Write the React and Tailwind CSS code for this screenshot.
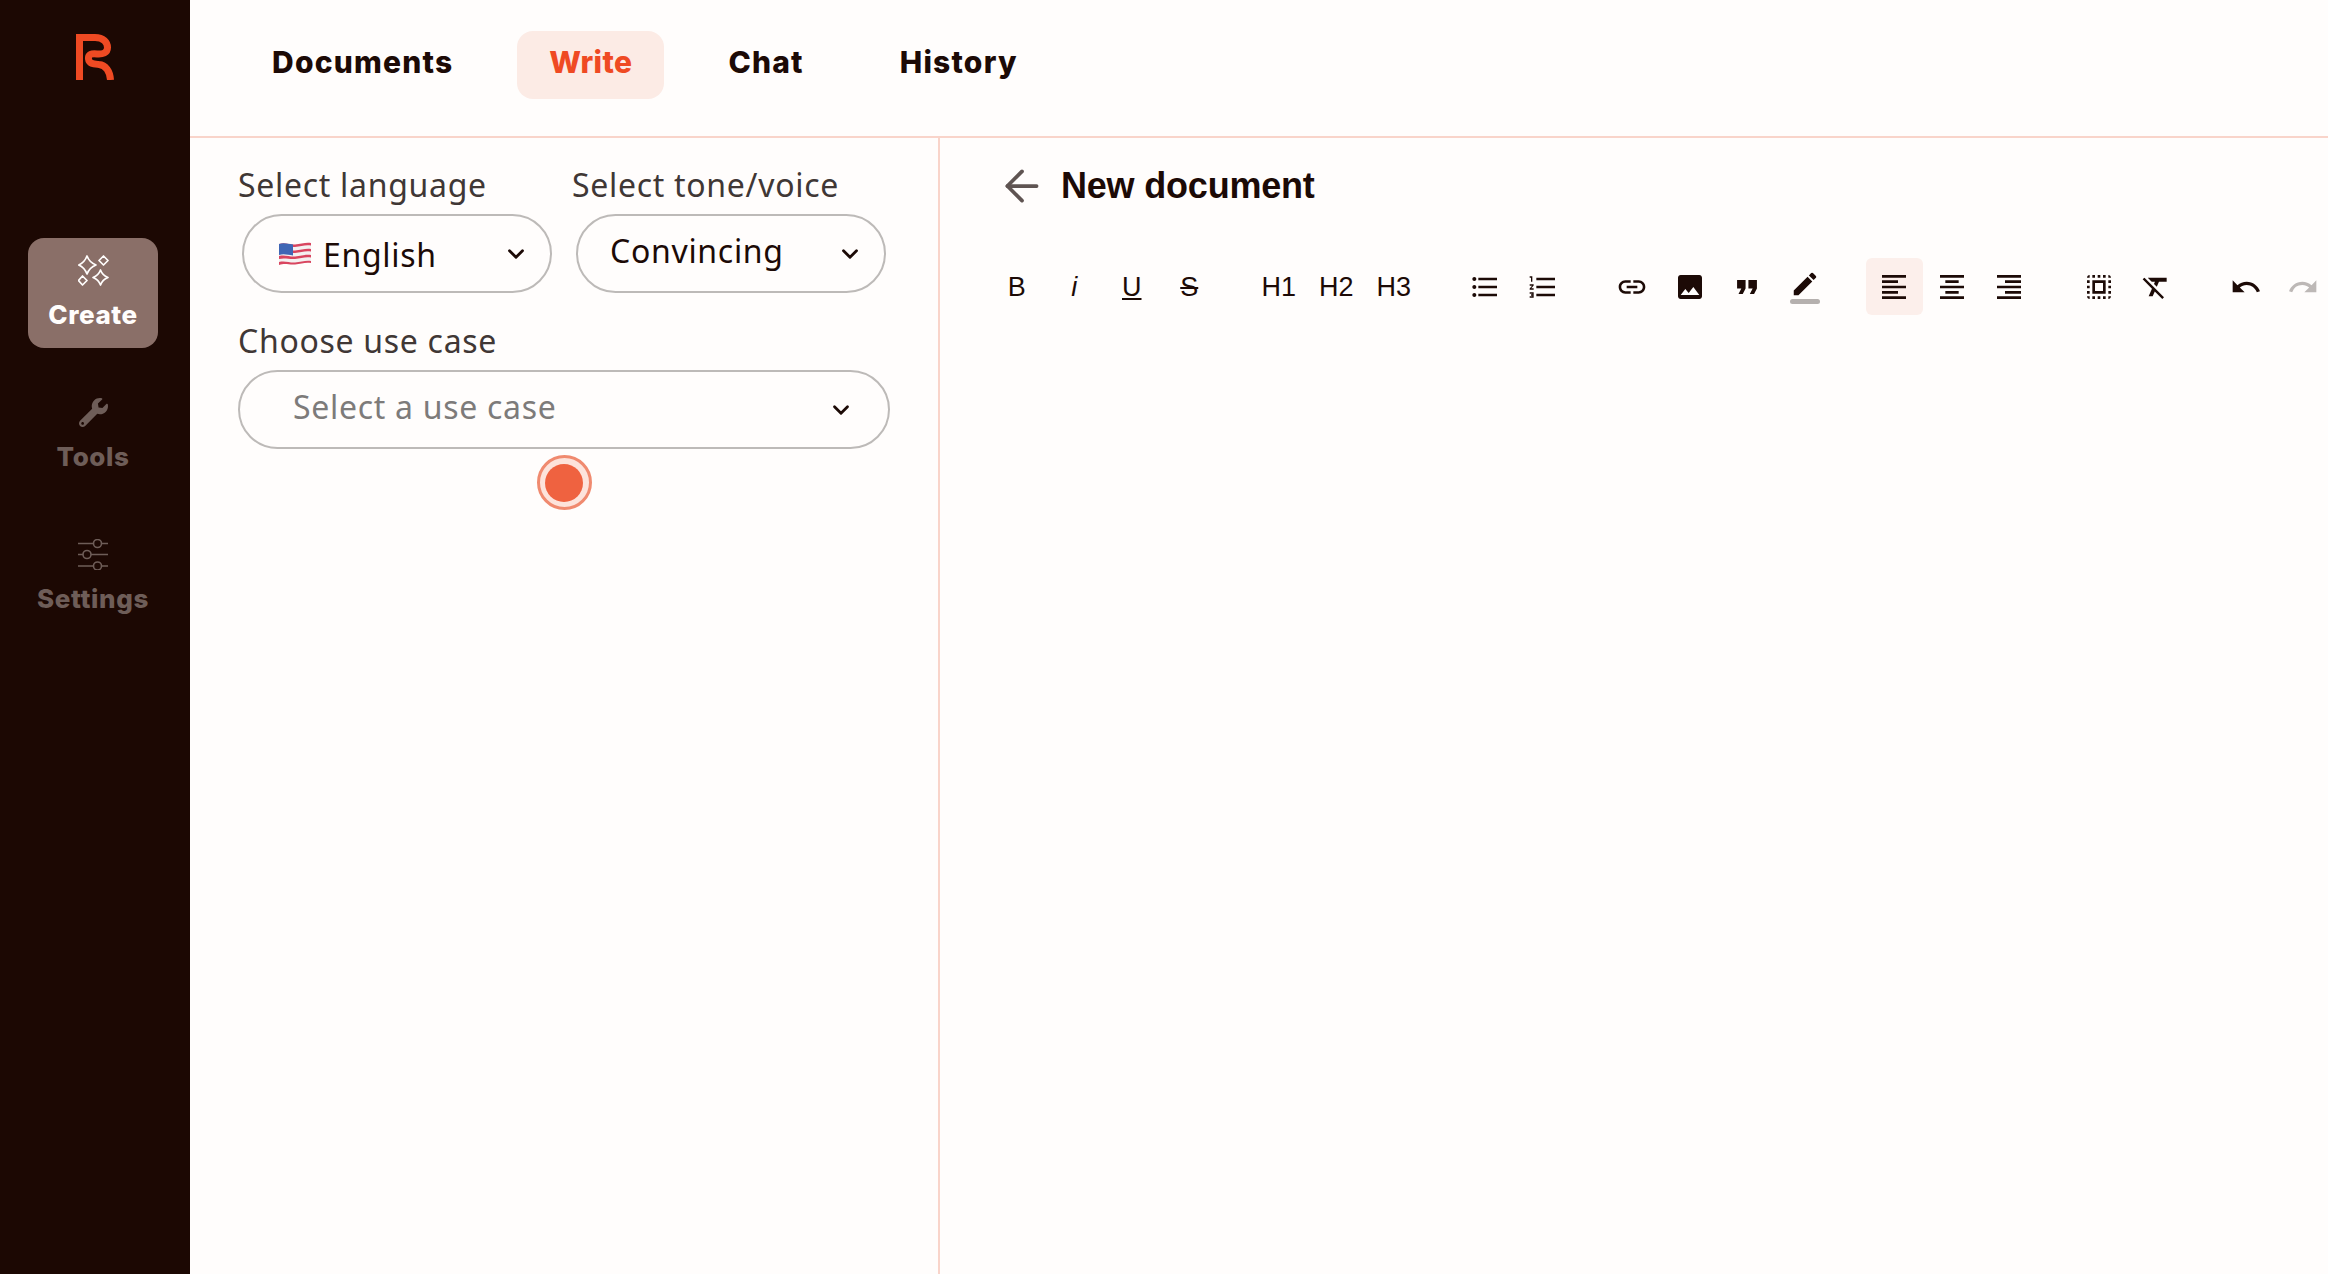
import { ArrowLeft, ChevronDown } from "lucide-react";
import { FaWrench } from "react-icons/fa";
import {
  MdFormatListBulleted,
  MdFormatListNumbered,
  MdLink,
  MdImage,
  MdFormatQuote,
  MdEdit,
  MdFormatAlignLeft,
  MdFormatAlignCenter,
  MdFormatAlignRight,
  MdSelectAll,
  MdFormatClear,
  MdUndo,
  MdRedo,
} from "react-icons/md";

const tabs = ["Documents", "Write", "Chat", "History"];

const Logo = () => (
  <svg width="38" height="46" viewBox="0 0 38 46" fill="none" stroke="#ef4a23" strokeWidth="7">
    <path d="M3.500 46V3.500H19C27.500 3.500 31.500 8.500 31.500 13.500C31.500 19 26.500 20.500 21 20C15.500 19.500 12 20 12.500 25C13 30 18 30 23 30.500C29.500 31 34 37 34.500 46" />
  </svg>
);

const Sparkles = () => (
  <svg width="31" height="31" viewBox="0 0 31 31" fill="none" stroke="#fffdfc" strokeWidth="1.7" strokeLinejoin="round">
    <path d="M9 1Q11.500 7.500 18 10Q11.500 12.500 9 19Q6.500 12.500 0.800 10Q6.500 7.500 9 1Z" />
    <path d="M25.500 1L30 5.500L25.500 10L21 5.500Z" />
    <path d="M4.500 21L9 25.500L4.500 30L0.500 25.500Z" />
    <path d="M22.500 15Q24.500 20.500 30 22.500Q24.500 24.500 22.500 30Q20.500 24.500 15 22.500Q20.500 20.500 22.500 15Z" />
  </svg>
);

const Sliders = () => (
  <svg width="31" height="31" viewBox="0 0 31 31" fill="none" stroke="#6e5d58" strokeWidth="1.6">
    <path d="M0 4.500H15M23 4.500H30M0 15.500H5M13 15.500H30M0 27H15M23 27H30" />
    <circle cx="19.500" cy="4.500" r="4" />
    <circle cx="9" cy="15.500" r="4" />
    <circle cx="19.500" cy="27" r="4" />
  </svg>
);

const Flag = () => (
  <svg width="32" height="24" viewBox="0 0 32 24">
    <path d="M0 2C6 0 11 3 16 2.500C22 2 27 0 32 1V21C26 20 22 22 16 22.500C10 23 6 21 0 23Z" fill="#f4f1f1" />
    <path d="M0 2C6 0 11 3 16 2.500C22 2 27 0 32 1V3.500C26 2.500 22 4.500 16 5C10 5.500 6 3.500 0 5Z" fill="#d9455f" />
    <path d="M0 8C6 6.500 11 9 16 8.500C22 8 27 6 32 7V9.500C26 8.500 22 10.500 16 11C10 11.500 6 9.500 0 11Z" fill="#d9455f" />
    <path d="M0 14C6 12.500 11 15 16 14.500C22 14 27 12 32 13V15.500C26 14.500 22 16.500 16 17C10 17.500 6 15.500 0 17Z" fill="#d9455f" />
    <path d="M0 20C6 18.500 11 21 16 20.500C22 20 27 18 32 19V21C26 20 22 22 16 22.500C10 23 6 21 0 23Z" fill="#d9455f" />
    <path d="M0 2C5 0.500 9 2 14 2.500V13.500C9 13 5 11.500 0 13Z" fill="#3f66b5" />
  </svg>
);

const NavItem = ({ icon, label, active }) => (
  <div
    className={`flex flex-col items-center justify-center w-[130px] h-[110px] pb-[3px] rounded-2xl font-['Inter',sans-serif] font-extrabold text-[26px] leading-8 tracking-[0.6px] ${
      active ? "bg-[#8a6f68] text-[#fffdfc]" : "text-[#6e5d58]"
    }`}
  >
    <div className="h-[36px] flex items-center justify-center">{icon}</div>
    <span className="mt-[11px]">{label}</span>
  </div>
);

const Btn = ({ children, active, className }) => (
  <button
    className={`w-[57.5px] h-[57px] shrink-0 rounded-md flex items-center justify-center text-[27px] text-[#1c0a06] ${
      active ? "bg-[#fcefeb]" : ""
    } ${className || ""}`}
  >
    {children}
  </button>
);

const App = () => {
  return (
    <div className="flex w-screen h-screen overflow-hidden bg-[#fffdfc] text-[#1c0a06]">
      <aside className="w-[190px] shrink-0 bg-[#1c0803] flex flex-col items-center">
        <div className="mt-[34px]">
          <Logo />
        </div>
        <div className="mt-[158px] mr-[4px] flex flex-col items-center gap-[32px]">
          <NavItem active icon={<Sparkles />} label="Create" />
          <NavItem icon={<FaWrench size={29} color="#6e5d58" />} label="Tools" />
          <NavItem icon={<Sliders />} label="Settings" />
        </div>
      </aside>

      <div className="flex-1 flex flex-col min-w-0">
        <header className="h-[138px] shrink-0 border-b-2 border-[#f9d4ca] flex items-start pl-[50px] pt-[31px] gap-8">
          {tabs.map((t) => (
            <div
              key={t}
              className={`h-[68px] px-8 pb-[5px] rounded-2xl flex items-center font-['Inter',sans-serif] font-extrabold text-[30px] ${
                t === "Write" ? "bg-[#fcebe5] text-[#ef4a23] tracking-[0.4px]" : "tracking-[1.2px]"
              }`}
            >
              {t}
            </div>
          ))}
        </header>

        <div className="flex-1 flex min-h-0">
          <section className="w-[750px] shrink-0 border-r-2 border-[#f9d4ca] pl-[48px] pt-[27px] font-['Noto_Sans',sans-serif] text-[32px] tracking-[0.7px]">
            <div className="flex gap-[20px]">
              <div className="w-[314px]">
                <div className="h-10 leading-10 text-[#403735]">Select language</div>
                <div className="ml-1 mt-[9px] w-[310px] h-[79px] rounded-full border-2 border-[#bdbab8] flex items-center pl-[35px] pr-[21px]">
                  <Flag />
                  <span className="ml-[12px] mt-[2px] flex-1">English</span>
                  <ChevronDown size={26} strokeWidth={2.6} />
                </div>
              </div>
              <div className="w-[314px]">
                <div className="h-10 leading-10 text-[#403735]">Select tone/voice</div>
                <div className="ml-1 mt-[9px] w-[310px] h-[79px] rounded-full border-2 border-[#bdbab8] flex items-center pl-[32px] pr-[21px]">
                  <span className="flex-1 mb-[6px]">Convincing</span>
                  <ChevronDown size={26} strokeWidth={2.6} />
                </div>
              </div>
            </div>

            <div className="mt-[28px] h-10 leading-10 text-[#403735]">Choose use case</div>
            <div className="mt-[9px] w-[652px] h-[79px] rounded-full border-2 border-[#bdbab8] flex items-center pl-[53px] pr-[34px] text-[#7d7b7a]">
              <span className="flex-1 mb-[6px]">Select a use case</span>
              <ChevronDown size={26} strokeWidth={2.6} className="text-[#1c0a06]" />
            </div>

            <div className="w-[652px] mt-[6px] flex justify-center">
              <div className="w-[55px] h-[55px] rounded-full border-[3px] border-[#f08a6f] bg-[#fde3db] flex items-center justify-center">
                <div className="w-[38px] h-[38px] rounded-full bg-[#ef6240]" />
              </div>
            </div>
          </section>

          <section className="flex-1 min-w-0 overflow-hidden pl-[48px] pt-[27px]">
            <div className="h-[42px] flex items-center">
              <ArrowLeft size={50} strokeWidth={1.8} className="ml-[9px] text-[#5f5452]" />
              <h1 className="ml-[14px] font-['Liberation_Sans',sans-serif] font-bold text-[36px] tracking-[-0.2px]">
                New document
              </h1>
            </div>

            <div className="mt-[51px] flex items-center font-['Liberation_Sans',sans-serif]">
              <div className="flex">
                <Btn className="pt-[2px]">B</Btn>
                <Btn className="pt-[2px]"><i>i</i></Btn>
                <Btn className="pt-[2px]"><u>U</u></Btn>
                <Btn className="pt-[2px]"><s>S</s></Btn>
              </div>
              <div className="flex ml-[32px]">
                <Btn className="pt-[2px]">H1</Btn>
                <Btn className="pt-[2px]">H2</Btn>
                <Btn className="pt-[2px]">H3</Btn>
              </div>
              <div className="flex ml-[34px]">
                <Btn><MdFormatListBulleted size={32} /></Btn>
                <Btn><MdFormatListNumbered size={32} /></Btn>
              </div>
              <div className="flex ml-[32px]">
                <Btn><MdLink size={32} /></Btn>
                <Btn><MdImage size={32} /></Btn>
                <Btn><MdFormatQuote size={34} /></Btn>
                <Btn>
                  <div className="flex flex-col items-center">
                    <MdEdit size={30} />
                    <div className="w-[30px] h-[5px] rounded-full bg-[#b5b0ae]" />
                  </div>
                </Btn>
              </div>
              <div className="flex ml-[32px]">
                <Btn active><MdFormatAlignLeft size={32} /></Btn>
                <Btn><MdFormatAlignCenter size={32} /></Btn>
                <Btn><MdFormatAlignRight size={32} /></Btn>
              </div>
              <div className="flex ml-[32px]">
                <Btn><MdSelectAll size={32} /></Btn>
                <Btn><MdFormatClear size={32} /></Btn>
              </div>
              <div className="flex ml-[32px]">
                <Btn><MdUndo size={32} /></Btn>
                <Btn><MdRedo size={32} className="text-[#bdb8b6]" /></Btn>
              </div>
            </div>
          </section>
        </div>
      </div>
    </div>
  );
};

export default App;
